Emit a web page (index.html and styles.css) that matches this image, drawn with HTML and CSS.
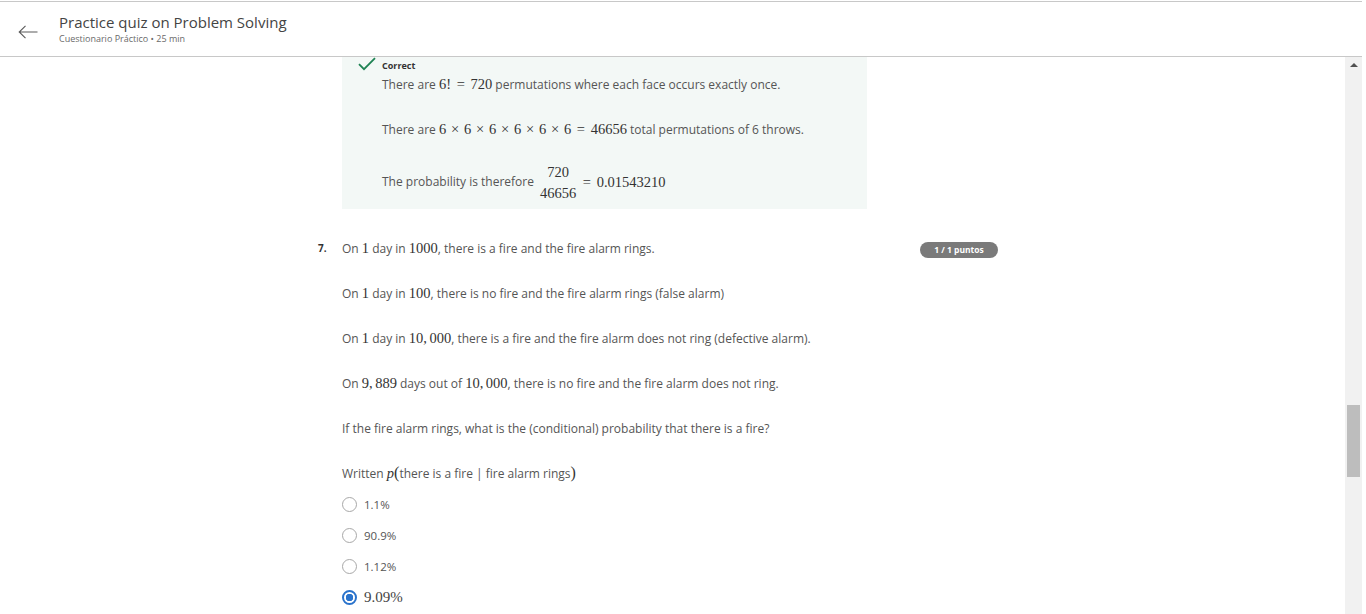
FILE: index.html
```html
<!DOCTYPE html>
<html lang="en">
<head>
<meta charset="utf-8">
<title>Practice quiz on Problem Solving</title>
<link rel="stylesheet" href="styles.css">
</head>
<body>
<div class="app">
  <header class="topbar">
    <div class="back">
      <svg width="20" height="14" viewBox="0 0 20 14"><path d="M19.5 7H1.2M7.5 0.8L1.2 7l6.3 6.2" fill="none" stroke="#5a5a5a" stroke-width="1.1"/></svg>
    </div>
    <div class="titles">
      <div class="title">Practice quiz on Problem Solving</div>
      <div class="subtitle">Cuestionario Práctico • 25 min</div>
    </div>
  </header>
  <div class="body">
    <main class="content">
      <section class="feedback">
        <div class="correct">
          <svg class="check" width="18" height="14" viewBox="0 0 18 14"><path d="M1 7.2l5 5L17 1.2" fill="none" stroke="#1f8354" stroke-width="1.8"/></svg>
          <span>Correct</span>
        </div>
        <p class="fb-line">There are <span class="m">6!<span class="rel">=</span>720</span> permutations where each face occurs exactly once.</p>
        <p class="fb-line">There are <span class="m">6<span class="bin">×</span>6<span class="bin">×</span>6<span class="bin">×</span>6<span class="bin">×</span>6<span class="bin">×</span>6<span class="rel">=</span>46656</span> total permutations of 6 throws.</p>
        <p class="fb-line frac-line">The probability is therefore <span class="frac"><span class="num">720</span><span class="den">46656</span></span><span class="m"><span class="rel">=</span>0.01543210</span></p>
      </section>

      <section class="question">
        <div class="qnum">7.</div>
        <div class="qbody">
          <p class="qp">On <span class="m">1</span> day in <span class="m">1000</span>, there is a fire and the fire alarm rings.</p>
          <p class="qp">On <span class="m">1</span> day in <span class="m">100</span>, there is no fire and the fire alarm rings (false alarm)</p>
          <p class="qp">On <span class="m">1</span> day in <span class="m">10,<span class="pun"></span>000</span>, there is a fire and the fire alarm does not ring (defective alarm).</p>
          <p class="qp">On <span class="m">9,<span class="pun"></span>889</span> days out of <span class="m">10,<span class="pun"></span>000</span>, there is no fire and the fire alarm does not ring.</p>
          <p class="qp">If the fire alarm rings, what is the (conditional) probability that there is a fire?</p>
          <p class="qp">Written <span class="m"><i>p</i><span class="paren">(</span></span>there is a fire | fire alarm rings<span class="m"><span class="paren">)</span></span></p>
          <ul class="options">
            <li class="opt"><span class="radio"></span><span class="lbl">1.1%</span></li>
            <li class="opt"><span class="radio"></span><span class="lbl">90.9%</span></li>
            <li class="opt"><span class="radio"></span><span class="lbl">1.12%</span></li>
            <li class="opt selected"><span class="radio"></span><span class="lbl m">9.09%</span></li>
          </ul>
        </div>
        <div class="badge">1 / 1 puntos</div>
      </section>
    </main>
    <div class="scrollbar">
      <div class="arrow-up"></div>
      <div class="thumb"></div>
    </div>
  </div>
</div>
</body>
</html>
```

FILE: styles.css
```css
* { box-sizing: border-box; }
html, body { margin: 0; padding: 0; background: #fff; }
body {
  font-family: "Open Sans", "Noto Sans", sans-serif;
  color: #555;
  overflow: hidden;
  height: 614px;
}
.app {
  width: 1362px;
  height: 614px;
  padding-top: 1px;
  display: flex;
  flex-direction: column;
}
.topbar {
  height: 56px;
  border-top: 1px solid #c8c8c8;
  border-bottom: 1px solid #c8c8c8;
  display: flex;
  align-items: flex-start;
  flex: none;
}
.back {
  width: 59px;
  padding: 23px 0 0 18px;
}
.back svg { display: block; }
.titles { padding-top: 9px; }
.title {
  font-size: 15px;
  line-height: 22px;
  color: #444;
}
.subtitle {
  font-size: 9px;
  line-height: 12px;
  color: #6a6a6a;
  margin-top: 0;
}
.body {
  flex: 1;
  display: flex;
  min-height: 0;
}
.content {
  flex: 1;
  padding-left: 318px;
  overflow: hidden;
}
.feedback {
  width: 525px;
  margin-left: 24px;
  background: #f3f8f6;
  padding: 1px 0 6px 16px;
}
.correct {
  display: flex;
  align-items: center;
  height: 14px;
  gap: 6px;
  font-size: 9px;
  font-weight: 700;
  color: #333;
}
.check { display: block; margin-top: -2px; }
.fb-line {
  margin: 0;
  padding-left: 24px;
  font-size: 12px;
  line-height: 20px;
  height: 20px;
  color: #555;
  white-space: nowrap;
}
.correct + .fb-line { margin-top: 3px; }
.fb-line + .fb-line { margin-top: 25px; }
.frac-line {
  display: flex;
  align-items: center;
  height: 42px;
  margin-top: 21px !important;
}
.m {
  font-family: "Liberation Serif", "Times New Roman", serif;
  font-size: 14.5px;
  line-height: 1;
  color: #333;
}
.rel { margin: 0 0.39em; }
.bin { margin: 0 0.33em; }
.pun { display: inline-block; width: 0.17em; }
.paren { font-size: 16px; }
.frac {
  display: inline-flex;
  flex-direction: column;
  align-items: center;
  font-family: "Liberation Serif", "Times New Roman", serif;
  font-size: 14.5px;
  color: #333;
  margin-left: 5px;
  line-height: 20px;
  gap: 1px;
}
.frac .num, .frac .den { padding: 0 1px; }
.question {
  display: grid;
  grid-template-columns: 24px 578px 78px;
  margin-top: 30px;
  width: 680px;
}
.qnum {
  font-size: 10px;
  font-weight: 700;
  line-height: 18px;
  color: #333;
}
.qbody { min-width: 0; }
.qp {
  margin: 0;
  font-size: 12px;
  line-height: 20px;
  height: 20px;
  color: #555;
  white-space: nowrap;
}
.qp + .qp { margin-top: 25px; }
.options {
  list-style: none;
  margin: 10px 0 0;
  padding: 0;
  display: flex;
  flex-direction: column;
  gap: 11px;
}
.opt {
  display: flex;
  align-items: center;
  height: 20px;
  gap: 7px;
  font-size: 11.5px;
  color: #555;
}
.radio {
  width: 15px;
  height: 15px;
  border-radius: 50%;
  border: 1.5px solid #a8a8a8;
  background: #fff;
  flex: none;
}
.opt.selected .radio {
  border: 2px solid #2a73cc;
  background: radial-gradient(circle, #2a73cc 0 3.5px, #fff 4px);
}
.opt .lbl.m { font-size: 15px; color: #444; }
.badge {
  align-self: start;
  margin-top: 3px;
  height: 16px;
  border-radius: 8px;
  background: #7a7a7a;
  color: #fff;
  font-size: 8.5px;
  font-weight: 700;
  line-height: 16px;
  text-align: center;
  white-space: nowrap;
}
.scrollbar {
  width: 17px;
  flex: none;
  background: #f1f1f1;
  position: relative;
}
.arrow-up {
  position: absolute;
  left: 5px;
  top: 6px;
  width: 0;
  height: 0;
  border-left: 4px solid transparent;
  border-right: 4px solid transparent;
  border-bottom: 4px solid #505050;
}
.thumb {
  position: absolute;
  left: 2px;
  top: 348px;
  width: 13px;
  height: 72px;
  background: #bdbdbd;
}
```
